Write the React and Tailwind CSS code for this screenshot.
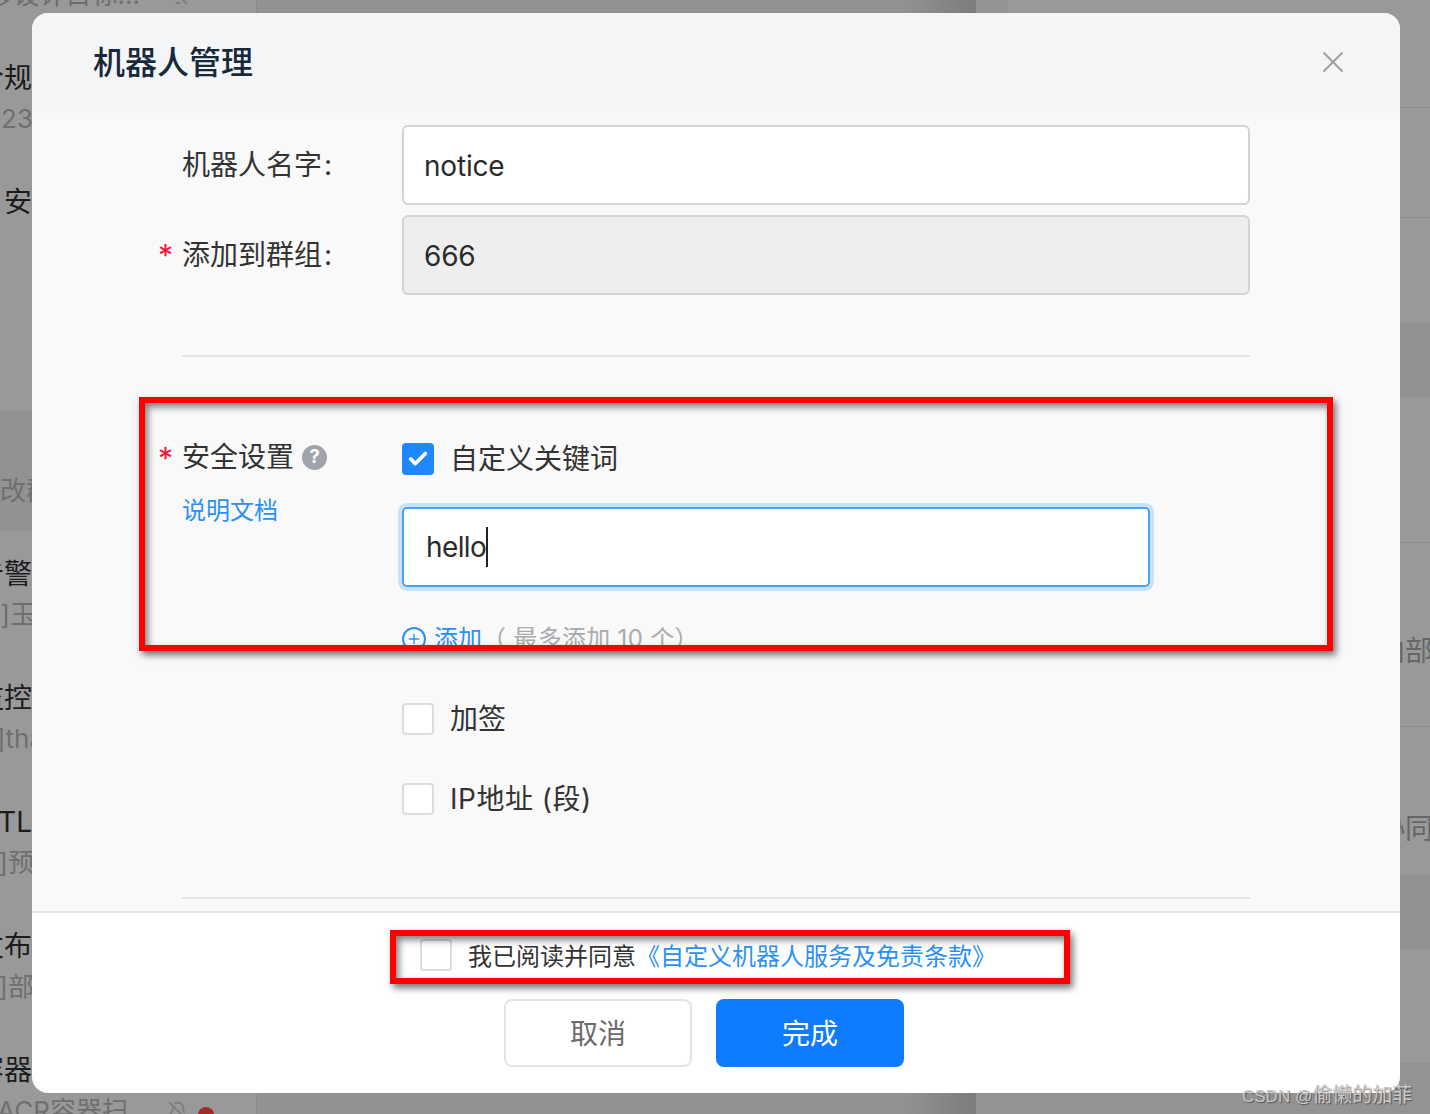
import React from "react";
import { BellOff, Check, X, Plus } from "lucide-react";

const leftRows = [
  { t: "", s: "移设计目标...", w: "w-[140px]", bell: "ml-[28px]" },
  { t: "合规", s: "2023", w: "w-[33px]" },
  { t: "安", s: "", w: "w-[32px]" },
  { t: "", s: "", w: "w-[32px]" },
  { t: "", s: "改群", w: "w-[52px]", sel: true },
  { t: "告警", s: "]玉", w: "w-[36px]" },
  { t: "监控", s: "]tha", w: "w-[44px]" },
  { t: "TL", s: "]预", w: "w-[34px]" },
  { t: "发布", s: "]部", w: "w-[34px]" },
  { t: "容器", s: "IACR容器扫", w: "w-[128px]", bell: "ml-[40px]", dot: true },
];

function LeftRow({ r }) {
  return (
    <div
      className={`h-[124px] overflow-hidden ${
        r.sel ? "bg-[#929292] border-t-[3px] border-[#999999] pt-[20px]" : "pt-[23px]"
      }`}
    >
      <div className="w-[32px] h-[40px] leading-[40px] flex justify-end text-[28px] text-[#1c1c1c] whitespace-nowrap overflow-hidden">
        <span className="shrink-0">{r.t}</span>
      </div>
      <div className="h-[41px] flex items-center text-[26px] text-[#6f6f6f] whitespace-nowrap">
        <div className={`${r.w} flex justify-end overflow-hidden shrink-0`}>
          <span className="shrink-0">{r.s}</span>
        </div>
        {r.bell && <BellOff size={20} className={`${r.bell} text-[#7d7d7d] shrink-0`} />}
        {r.dot && <span className="ml-[10px] mt-[8px] w-[16px] h-[16px] rounded-full bg-[#a32a25] shrink-0" />}
      </div>
    </div>
  );
}

function Box({ checked }) {
  return (
    <span
      className={`w-[32px] h-[32px] rounded-[4px] shrink-0 flex items-center justify-center border-2 ${
        checked ? "bg-[#2088ff] border-[#2088ff]" : "bg-white border-[#dcdcdc]"
      }`}
    >
      {checked && <Check size={22} strokeWidth={4} className="text-white" />}
    </span>
  );
}

function Star({ className }) {
  return (
    <span className={`absolute left-[-24px] text-[30px] leading-[40px] text-[#f5143c] ${className}`}>*</span>
  );
}

function Field({ label, required, value, disabled }) {
  return (
    <div className="grid grid-cols-[220px_1fr] items-center">
      <div className="relative text-[28px] text-[#333333] leading-[40px]">
        {required && <Star className="top-0" />}
        {label}
        <span className="ml-[2px]">:</span>
      </div>
      <div
        className={`h-[80px] rounded-[6px] border-2 border-[#d4d4d4] px-[20px] pt-[2px] flex items-center text-[28px] text-[#2b2b2b] tracking-[-0.2px] ${
          disabled ? "bg-[#eeeeee]" : "bg-white"
        }`}
      >
        {value}
      </div>
    </div>
  );
}

function RedBox({ className }) {
  return (
    <div
      className={`absolute border-[6px] border-[#ff0000] shadow-[3px_4px_7px_rgba(0,0,0,0.55),inset_3px_4px_7px_rgba(0,0,0,0.5)] ${className}`}
    />
  );
}

export default function App() {
  return (
    <div className="relative w-[1430px] h-[1114px] overflow-hidden flex bg-[#999999] font-['Inter','Noto_Sans_CJK_SC',sans-serif]">
      {/* dimmed page behind the dialog */}
      <div className="w-[257px] shrink-0 border-r border-[#8a8a8a] mt-[-89px]">
        {leftRows.map((r, i) => (
          <LeftRow key={i} r={r} />
        ))}
      </div>
      <div className="w-[719px] shrink-0 bg-gradient-to-r from-[#929292] via-[#929292] via-[90%] to-[#7c7c7c]" />
      <div className="w-[32px] shrink-0 bg-[#949494]" />
      <div className="flex-1 flex flex-col">
        <div className="h-[108px] border-b border-[#8c8c8c]" />
        <div className="h-[110px] border-b border-[#8c8c8c]" />
        <div className="h-[104px]" />
        <div className="h-[75px] bg-[#929292]" />
        <div className="h-[146px] border-b border-[#8c8c8c]" />
        <div className="h-[184px] border-b border-[#8c8c8c] flex items-center justify-end pt-[32px] text-[28px] text-[#666666] whitespace-nowrap overflow-hidden">
          <span className="shrink-0 mr-[-3px]">内部</span>
        </div>
        <div className="h-[147px] flex items-center justify-end pt-[56px] text-[28px] text-[#666666] whitespace-nowrap overflow-hidden">
          <span className="shrink-0 mr-[-3px]">协同</span>
        </div>
        <div className="h-[75px] bg-[#929292]" />
        <div className="h-[114px]" />
        <div className="flex-1 bg-[#939393]" />
      </div>

      {/* dialog */}
      <div className="absolute left-[32px] top-[13px] w-[1368px] h-[1080px] rounded-[16px] overflow-hidden flex flex-col bg-white">
        <div className="h-[100px] shrink-0 bg-[#f4f5f7] flex items-center justify-between pl-[61px] pr-[49px]">
          <span className="text-[32px] font-medium text-[#17293a]">机器人管理</span>
          <X size={36} strokeWidth={1.4} className="text-[#a2a2a2] mb-[2px]" />
        </div>

        <div className="h-[798px] shrink-0 bg-[#f9f9f9] px-[150px] pt-[12px]">
          <div className="flex flex-col gap-[10px]">
            <Field label="机器人名字" value="notice" />
            <Field label="添加到群组" value="666" required disabled />
          </div>
          <div className="mt-[60px] h-[2px] bg-[#e6e6e6]" />

          <div className="mt-[86px] ml-[-30px] pl-[30px] pr-[4px] mr-[-4px] h-[205px] overflow-hidden grid grid-cols-[220px_1fr]">
            <div>
              <div className="relative h-[32px] mt-[-2px] flex items-center text-[28px] text-[#333333]">
                <Star className="top-[-3px]" />
                安全设置
                <span className="ml-[8px] w-[25px] h-[25px] rounded-full bg-[#a0a4aa] text-white text-[19px] font-bold flex items-center justify-center">
                  ?
                </span>
              </div>
              <div className="mt-[22px] text-[24px] leading-[32px] text-[#2a90f7]">说明文档</div>
            </div>
            <div className="pl-[4px] ml-[-4px]">
              <div className="h-[32px] flex items-center text-[28px] text-[#333333]">
                <Box checked />
                <span className="ml-[16px]">自定义关键词</span>
              </div>
              <div className="mt-[32px] w-[748px] h-[80px] bg-white rounded-[5px] border-2 border-[#4aa2f6] shadow-[0_0_0_4px_#c9e2fb] pl-[22px] flex items-center text-[28px] text-[#2b2b2b] tracking-[-0.6px]">
                hello
                <span className="w-[2px] h-[40px] bg-[#222222]" />
              </div>
              <div className="mt-[40px] flex items-center h-[24px] text-[24px] whitespace-nowrap">
                <span className="w-[24px] h-[24px] rounded-full border-2 border-[#2a90f7] flex items-center justify-center text-[#2a90f7]">
                  <Plus size={16} strokeWidth={2} />
                </span>
                <span className="ml-[8px] text-[#2a90f7]">添加</span>
                <span className="text-[#a9abae] tracking-[0.3px]">（ 最多添加 10 个）</span>
              </div>
            </div>
          </div>

          <div className="mt-[55px] pl-[220px] flex flex-col gap-[48px]">
            <div className="h-[32px] flex items-center text-[28px] text-[#333333]">
              <Box />
              <span className="ml-[16px]">加签</span>
            </div>
            <div className="h-[32px] flex items-center text-[28px] text-[#333333]">
              <Box />
              <span className="ml-[16px] tracking-[0.5px]">IP地址 (段)</span>
            </div>
          </div>
          <div className="mt-[82px] h-[2px] bg-[#e6e6e6]" />
        </div>

        <div className="flex-1 border-t-2 border-[#e6e6e6] pt-[26px]">
          <div className="pl-[388px] h-[32px] flex items-center text-[24px] whitespace-nowrap">
            <Box />
            <span className="ml-[16px] pt-[3px] text-[#333333]">我已阅读并同意</span>
            <span className="pt-[3px] text-[#2a90f7]">《自定义机器人服务及免责条款》</span>
          </div>
          <div className="mt-[28px] pl-[472px] flex gap-[24px]">
            <div className="w-[188px] h-[68px] pt-[2px] rounded-[8px] border-2 border-[#e4e4e4] bg-white flex items-center justify-center text-[28px] text-[#6b6b6b]">
              取消
            </div>
            <div className="w-[188px] h-[68px] pt-[2px] rounded-[8px] bg-[#0f7bff] flex items-center justify-center text-[28px] text-white">
              完成
            </div>
          </div>
        </div>
      </div>

      {/* annotations */}
      <RedBox className="left-[139px] top-[397px] w-[1194px] h-[254px]" />
      <RedBox className="left-[390px] top-[930px] w-[680px] h-[54px]" />

      <div className="absolute left-[1242px] top-[1082px] text-[20px] leading-[26px] text-[#c9c9c9] whitespace-nowrap [text-shadow:1px_1px_1px_rgba(0,0,0,0.45)]">
        <span className="text-[17px] font-['Liberation_Sans',sans-serif]">CSDN @</span>
        偷懒的加菲
      </div>
    </div>
  );
}
